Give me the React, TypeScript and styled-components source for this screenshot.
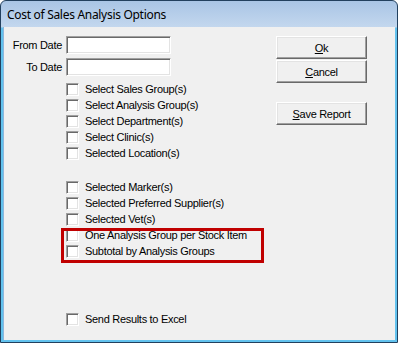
import React from 'react';
import styled, { createGlobalStyle } from 'styled-components';

const GlobalStyle = createGlobalStyle`
    html, body {
        margin: 0;
        padding: 0;
        background: #ffffff;
    }
    body {
        font-family: "Liberation Sans", Arial, sans-serif;
        font-size: 11px;
        letter-spacing: -0.3px;
        color: #000;
    }
`;

const Window = styled.div`
    width: 398px;
    height: 343px;
    box-sizing: border-box;
    display: flex;
    flex-direction: column;
    border: 1px solid #22405e;
    border-radius: 6px 6px 0 0;
    overflow: hidden;
    background: linear-gradient(#a9c5e5, #c3d7ee 26px, #62c2ee 27px);
`;

const TitleBar = styled.div`
    height: 26px;
    flex: none;
    display: flex;
    align-items: center;
    padding-left: 6px;
    font-family: "Noto Sans", "Open Sans", sans-serif;
    font-size: 12px;
    letter-spacing: -0.3px;
    color: #000;
`;

const Client = styled.div`
    flex: 1;
    position: relative;
    display: flex;
    justify-content: space-between;
    margin: 0 2px 2px 2px;
    padding: 9px 28px 0 0;
    background: #f0f0f0;
    border-left: 1px solid #8fb7dc;
`;

const LeftColumn = styled.div`
    display: flex;
    flex-direction: column;
`;

const DateRow = styled.div`
    display: flex;
    align-items: center;
    gap: 4px;
    height: 18px;
    margin-bottom: 4px;
`;

const DateLabel = styled.label`
    width: 58px;
    text-align: right;
`;

const TextBox = styled.input`
    width: 105px;
    height: 18px;
    box-sizing: border-box;
    margin: 0;
    padding: 1px 3px;
    background: #fff;
    border-top: 1px solid #a0a0a0;
    border-left: 1px solid #a0a0a0;
    border-bottom: 1px solid #fff;
    border-right: 1px solid #fff;
    box-shadow: inset 1px 1px #696969, inset -1px -1px #e3e3e3;
    font: inherit;
    outline: none;
`;

const CheckGroup = styled.div<{ $gap: number }>`
    display: flex;
    flex-direction: column;
    margin-top: ${(p) => p.$gap}px;
    padding-left: 62px;
`;

const CheckRow = styled.label`
    display: flex;
    align-items: center;
    height: 16px;
    white-space: nowrap;
`;

const Box = styled.span`
    width: 13px;
    height: 13px;
    box-sizing: border-box;
    margin-right: 6px;
    background: #fff;
    border-top: 1px solid #a0a0a0;
    border-left: 1px solid #a0a0a0;
    border-bottom: 1px solid #fff;
    border-right: 1px solid #fff;
    box-shadow: inset 1px 1px #696969, inset -1px -1px #e3e3e3;
`;

const ButtonColumn = styled.div`
    display: flex;
    flex-direction: column;
`;

const Button = styled.button<{ $gap?: number }>`
    width: 91px;
    height: 23px;
    margin: ${(p) => p.$gap ?? 0}px 0 0 0;
    padding: 0;
    box-sizing: border-box;
    background: #f0f0f0;
    border-top: 1px solid #fff;
    border-left: 1px solid #fff;
    border-bottom: 1px solid #696969;
    border-right: 1px solid #696969;
    box-shadow: inset -1px -1px #a0a0a0, inset 1px 1px #e3e3e3;
    font: inherit;
    letter-spacing: inherit;
    color: #000;
`;

const Highlight = styled.div`
    position: absolute;
    left: 57px;
    top: 201px;
    width: 203px;
    height: 35px;
    box-sizing: border-box;
    border: 3px solid #c00000;
    pointer-events: none;
`;

const Check = ({ label }: { label: string }) => (
    <CheckRow>
        <Box />
        {label}
    </CheckRow>
);

const App: React.FC = () => {
    const groupA = [
        'Select Sales Group(s)',
        'Select Analysis Group(s)',
        'Select Department(s)',
        'Select Clinic(s)',
        'Selected Location(s)',
    ];
    const groupB = [
        'Selected Marker(s)',
        'Selected Preferred Supplier(s)',
        'Selected Vet(s)',
        'One Analysis Group per Stock Item',
        'Subtotal by Analysis Groups',
    ];

    return (
        <>
            <GlobalStyle />
            <Window>
                <TitleBar>Cost of Sales Analysis Options</TitleBar>
                <Client>
                    <LeftColumn>
                        <DateRow>
                            <DateLabel>From Date</DateLabel>
                            <TextBox type="text" />
                        </DateRow>
                        <DateRow>
                            <DateLabel>To Date</DateLabel>
                            <TextBox type="text" />
                        </DateRow>
                        <CheckGroup $gap={1}>
                            {groupA.map((l) => (
                                <Check key={l} label={l} />
                            ))}
                        </CheckGroup>
                        <CheckGroup $gap={18}>
                            {groupB.map((l) => (
                                <Check key={l} label={l} />
                            ))}
                        </CheckGroup>
                        <CheckGroup $gap={52}>
                            <Check label="Send Results to Excel" />
                        </CheckGroup>
                    </LeftColumn>
                    <ButtonColumn>
                        <Button><u>O</u>k</Button>
                        <Button $gap={1}><u>C</u>ancel</Button>
                        <Button $gap={19}><u>S</u>ave Report</Button>
                    </ButtonColumn>
                    <Highlight />
                </Client>
            </Window>
        </>
    );
};

export default App;
